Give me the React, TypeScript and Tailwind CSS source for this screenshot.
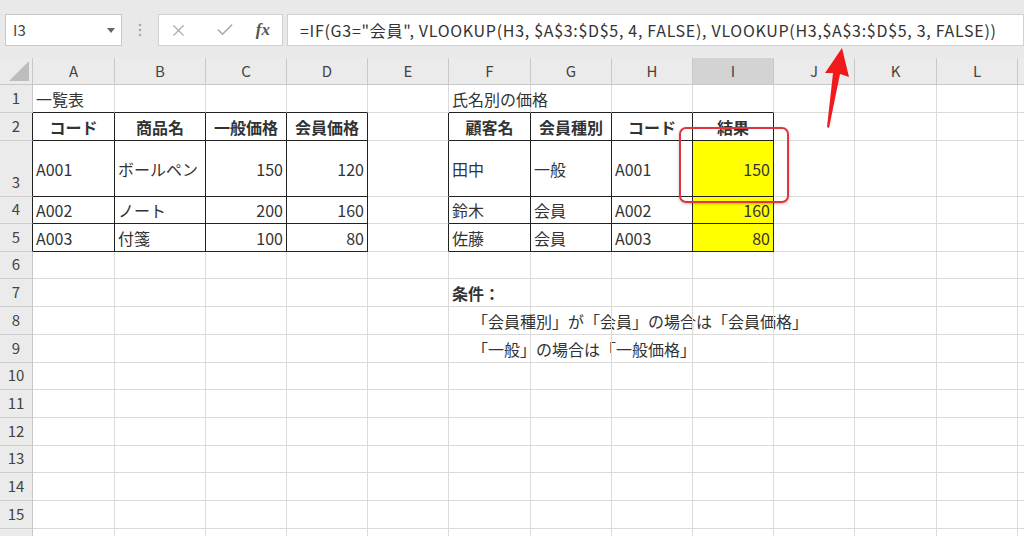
import React from 'react';
import { X, Check } from 'lucide-react';

type Cell = {
  text: string;
  align?: 'left' | 'center' | 'right';
  bold?: boolean;
  yellow?: boolean;
  indent?: boolean;
};

const cols = ['A', 'B', 'C', 'D', 'E', 'F', 'G', 'H', 'I', 'J', 'K', 'L', 'M'];
const rowCount = 16;

// r = row number, c = column index (1 = A)
const cells: Record<string, Cell> = {
  '1-1': { text: '一覧表' },
  '2-1': { text: 'コード', align: 'center', bold: true },
  '2-2': { text: '商品名', align: 'center', bold: true },
  '2-3': { text: '一般価格', align: 'center', bold: true },
  '2-4': { text: '会員価格', align: 'center', bold: true },
  '3-1': { text: 'A001' },
  '3-2': { text: 'ボールペン' },
  '3-3': { text: '150', align: 'right' },
  '3-4': { text: '120', align: 'right' },
  '4-1': { text: 'A002' },
  '4-2': { text: 'ノート' },
  '4-3': { text: '200', align: 'right' },
  '4-4': { text: '160', align: 'right' },
  '5-1': { text: 'A003' },
  '5-2': { text: '付箋' },
  '5-3': { text: '100', align: 'right' },
  '5-4': { text: '80', align: 'right' },

  '1-6': { text: '氏名別の価格' },
  '2-6': { text: '顧客名', align: 'center', bold: true },
  '2-7': { text: '会員種別', align: 'center', bold: true },
  '2-8': { text: 'コード', align: 'center', bold: true },
  '2-9': { text: '結果', align: 'center', bold: true },
  '3-6': { text: '田中' },
  '3-7': { text: '一般' },
  '3-8': { text: 'A001' },
  '3-9': { text: '150', align: 'right', yellow: true },
  '4-6': { text: '鈴木' },
  '4-7': { text: '会員' },
  '4-8': { text: 'A002' },
  '4-9': { text: '160', align: 'right', yellow: true },
  '5-6': { text: '佐藤' },
  '5-7': { text: '会員' },
  '5-8': { text: 'A003' },
  '5-9': { text: '80', align: 'right', yellow: true },

  '7-6': { text: '条件：', bold: true },
  '8-6': { text: '「会員種別」が「会員」の場合は「会員価格」', indent: true },
  '9-6': { text: '「一般」の場合は「一般価格」', indent: true },
};

const tables = [
  { c1: 1, c2: 4, r1: 2, r2: 5 },
  { c1: 6, c2: 9, r1: 2, r2: 5 },
];

const inRange = (v: number, a: number, b: number) => v >= a && v <= b;

function blackRight(r: number, c: number) {
  return tables.some(
    (t) => inRange(r, t.r1, t.r2) && (inRange(c, t.c1, t.c2) || c + 1 === t.c1)
  );
}

function blackBottom(r: number, c: number) {
  return tables.some(
    (t) => inRange(c, t.c1, t.c2) && (inRange(r, t.r1, t.r2) || r + 1 === t.r1)
  );
}

const font = { fontFamily: '"Noto Sans CJK JP", "Noto Sans", sans-serif' };

const FormulaBar: React.FC = () => (
  <div className="h-[58px] bg-[#e9e9e9] flex items-start pt-[14px] pl-[5px] gap-0">
    <div className="w-[117px] h-[32px] bg-white border border-[#c8c8c8] flex items-center justify-between pl-[7px] pr-[6px]">
      <span className="text-[15px] text-[#444]">I3</span>
      <svg width="8" height="5" viewBox="0 0 8 5">
        <path d="M0 0 L8 0 L4 5 Z" fill="#666" />
      </svg>
    </div>
    <div className="w-[36px] h-[32px] flex items-center justify-center">
      <svg width="4" height="14" viewBox="0 0 4 14">
        <circle cx="2" cy="2" r="1.3" fill="#aaa" />
        <circle cx="2" cy="7" r="1.3" fill="#aaa" />
        <circle cx="2" cy="12" r="1.3" fill="#aaa" />
      </svg>
    </div>
    <div className="w-[125px] h-[32px] bg-white border border-[#d0d0d0] flex items-center pl-[10px] pr-[12px] justify-between">
      <X size={19} strokeWidth={1.4} color="#a8a8a8" />
      <Check size={20} strokeWidth={1.8} color="#a8a8a8" className="ml-[6px]" />
      <span
        className="text-[17px] italic text-[#555] font-bold"
        style={{ fontFamily: '"Liberation Serif", serif' }}
      >
        fx
      </span>
    </div>
    <div className="flex-1 ml-[4px] h-[32px] bg-white border border-[#d0d0d0] flex items-center pl-[12px] whitespace-nowrap overflow-hidden">
      <span className="text-[16px] text-[#333] tracking-[0.7px]">
        =IF(G3="会員", VLOOKUP(H3, $A$3:$D$5, 4, FALSE), VLOOKUP(H3,$A$3:$D$5, 3, FALSE))
      </span>
    </div>
  </div>
);

const Sheet: React.FC = () => {
  const items: React.ReactNode[] = [];

  // header row
  items.push(
    <div
      key="corner"
      className="bg-[#ebebeb] border-r border-b border-[#c8c8c8] flex items-end justify-end pr-[3px] pb-[3px]"
    >
      <svg width="20" height="20" viewBox="0 0 20 20">
        <path d="M20 0 L20 20 L0 20 Z" fill="#bdbdbd" />
      </svg>
    </div>
  );
  cols.forEach((l, i) => {
    const sel = l === 'I';
    items.push(
      <div
        key={'h' + l}
        className={
          'border-r border-b border-[#c9c9c9] flex items-center justify-center text-[15px] text-[#444] ' +
          (sel ? 'bg-[#d3d3d3]' : 'bg-[#ebebeb]')
        }
      >
        {i < 12 ? l : ''}
      </div>
    );
  });

  for (let r = 1; r <= rowCount; r++) {
    items.push(
      <div
        key={'r' + r}
        className={
          'bg-[#ebebeb] border-b border-[#cdcdcd] flex justify-center items-end pb-[3px] text-[15px] text-[#444] ' +
          (blackRight(r, 0) ? 'border-r border-r-[#222]' : 'border-r border-r-[#c8c8c8]')
        }
      >
        {r < rowCount ? r : ''}
      </div>
    );
    for (let c = 1; c <= cols.length; c++) {
      const cell = cells[`${r}-${c}`];
      const br = blackRight(r, c) ? 'border-r-[#222]' : 'border-r-[#dadada]';
      const bb = blackBottom(r, c) ? 'border-b-[#222]' : 'border-b-[#dadada]';
      const justify =
        cell?.align === 'center'
          ? 'justify-center'
          : cell?.align === 'right'
          ? 'justify-end pr-[3px]'
          : cell?.indent
          ? 'justify-start pl-[23px]'
          : 'justify-start pl-[3px]';
      items.push(
        <div
          key={`c${r}-${c}`}
          className={`border-r border-b ${br} ${bb} flex items-center ${justify} whitespace-nowrap overflow-visible text-[16px] text-[#333] ${
            cell?.yellow ? 'bg-[#ffff00]' : ''
          } ${cell?.bold ? 'font-bold' : ''}`}
        >
          {cell?.text}
        </div>
      );
    }
  }

  return (
    <div className="grid grid-cols-[33px_82px_91px_81px_81px_81px_82px_81px_81px_81px_81px_82px_81px_81px] grid-rows-[27px_28px_28px_56px_27px_28px_27px_28px_28px_28px_27px_28px_28px_27px_28px_28px_28px] bg-white">
      {items}
    </div>
  );
};

export default function App() {
  return (
    <div className="relative w-[1024px] h-[536px] overflow-hidden bg-white" style={font}>
      <FormulaBar />
      <Sheet />
      {/* highlight box around I3 */}
      <div className="absolute left-[679px] top-[127px] w-[110px] h-[76px] border-2 border-[#e0353c] rounded-[7px] shadow-[0_1px_3px_rgba(0,0,0,0.25)] pointer-events-none" />
      {/* arrow pointing at the second VLOOKUP range */}
      <svg className="absolute left-0 top-0 pointer-events-none" width="1024" height="536">
        <polygon
          points="842,48 849,77 840,74 829,128 827,127 833,73 825,73"
          fill="#f01a1a"
        />
      </svg>
    </div>
  );
}
